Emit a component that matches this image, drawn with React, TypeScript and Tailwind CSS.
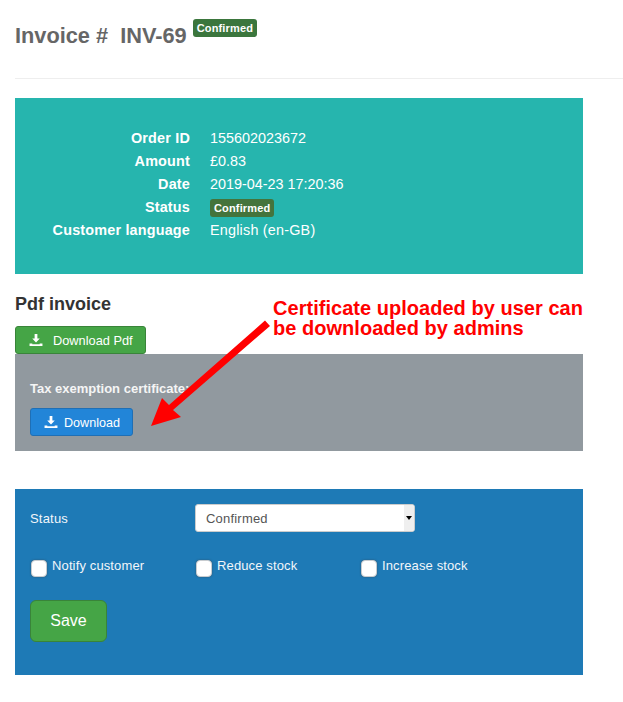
const sans = "font-['Liberation_Sans',Arial,sans-serif]"

function DownloadIcon() {
  return (
    <svg width="14" height="12" viewBox="0 0 14 13" className="mb-px shrink-0" fill="currentColor">
      <path d="M5.5 0h3v5h2.6L7 9.2 2.9 5h2.6z" />
      <path d="M0 10.2h3v1h8v-1h3V13H0z" />
    </svg>
  )
}

function Badge({ className }: { className: string }) {
  return (
    <span className={`inline-block rounded-[3px] px-[4px] text-[11px] font-bold leading-[18px] text-white tracking-[0.15px] ${className}`}>
      Confirmed
    </span>
  )
}

function Check({ label, w }: { label: string; w: string }) {
  return (
    <label className={`flex items-start ${w}`}>
      <input
        type="checkbox"
        className="mt-[3px] ml-px h-[17px] w-[16px] appearance-none rounded-[4px] border border-[#c8ccd0] bg-white shadow-[0_0_2px_rgba(60,60,60,0.6)]"
      />
      <span className="ml-[5px] text-[13px] leading-[18px] text-[#f2f6fa] tracking-[0.13px]">{label}</span>
    </label>
  )
}

export default function App() {
  const rows: [string, React.ReactNode][] = [
    ['Order ID', '155602023672'],
    ['Amount', '£0.83'],
    ['Date', '2019-04-23 17:20:36'],
    ['Status', <Badge className="bg-[#44743c]" />],
    ['Customer language', <span className="tracking-[0.2px]">English (en-GB)</span>],
  ]

  return (
    <div className={`relative h-[702px] w-[623px] overflow-hidden bg-white ${sans}`}>
      {/* Header */}
      <div className="px-[15px] pt-[19px]">
        <div className="flex items-start">
          <h1 className="mt-[3px] whitespace-pre text-[21.75px] font-bold leading-[27px] text-[#666]">Invoice #  INV-69</h1>
          <Badge className="ml-[6px] bg-[#3b763d]" />
        </div>
      </div>
      <div className="ml-[15px] mt-[29px] h-px bg-[#eee]" />

      <div className="w-[583px] pl-[15px]">
        {/* Order details */}
        <div className="mt-[19px] h-[176px] bg-[#26b5ae] pt-[29px] text-[14.4px] text-white">
          {rows.map(([label, value]) => (
            <div key={label} className="flex h-[23px] items-center leading-[23px]">
              <div className="w-[175px] text-right font-bold tracking-[0.18px]">{label}</div>
              <div className="ml-[20px] flex-1">{value}</div>
            </div>
          ))}
        </div>

        {/* Pdf invoice */}
        <h2 className="mt-[20px] text-[18px] font-bold leading-[20px] text-[#333]">Pdf invoice</h2>
        <button className="mt-[12px] flex h-[28px] w-[131px] items-center rounded-[3px] border border-[#398439] bg-[#45a546] pl-[13px] text-[12.8px] text-white">
          <DownloadIcon />
          <span className="ml-[10px] pt-[2px]">Download Pdf</span>
        </button>

        {/* Certificate */}
        <div className="h-[97px] bg-[#91999f] pl-[15px] pt-[27px]">
          <div className="text-[13px] font-bold leading-[16px] text-[#f5f5f5]">Tax exemption certificate:</div>
          <button className="mt-[11px] flex h-[28px] w-[103px] items-center rounded-[3px] border border-[#1f6fb5] bg-[#2285d8] pl-[13px] text-[12.6px] text-white">
            <DownloadIcon />
            <span className="ml-[6px] pt-[2px]">Download</span>
          </button>
        </div>

        {/* Status form */}
        <div className="mt-[38px] h-[186px] bg-[#1e7ab6] pl-[15px] pt-[15px]">
          <div className="flex h-[28px] items-center">
            <div className="w-[165px] pt-[2px] text-[13px] tracking-[0.2px] text-[#f2f6fa]">Status</div>
            <div className="relative h-[28px] w-[220px]">
              <select
                defaultValue="Confirmed"
                className="h-full w-full appearance-none rounded-[3px] border border-[#ccc] bg-white pl-[10px] pt-[2px] text-[13px] tracking-[0.2px] text-[#555] outline-none"
              >
                <option>Confirmed</option>
              </select>
              <div className="pointer-events-none absolute right-px top-px flex h-[26px] w-[10px] items-center justify-center rounded-r-[2px] bg-[#efefef]">
                <span className="h-0 w-0 border-x-[3px] border-t-[4px] border-x-transparent border-t-black" />
              </div>
            </div>
          </div>
          <div className="mt-[25px] flex">
            <Check label="Notify customer" w="w-[165px]" />
            <Check label="Reduce stock" w="w-[165px]" />
            <Check label="Increase stock" w="w-[165px]" />
          </div>
          <button className="mt-[23px] h-[42px] w-[77px] rounded-[6px] border border-[#398439] bg-[#45a546] text-[16px] text-white">
            Save
          </button>
        </div>
      </div>

      {/* Annotation */}
      <div className="absolute left-[273px] top-[298px] w-[330px] text-[20px] font-bold leading-[20px] tracking-[0.03px] text-[#ff0000]">
        Certificate uploaded by user can<br />be downloaded by admins
      </div>
      <svg className="absolute left-0 top-0" width="623" height="702" fill="#ff0000">
        <path d="M265 320.5L270 326L173 410L181 417L151 426L162 398L169 405z" />
      </svg>
    </div>
  )
}
